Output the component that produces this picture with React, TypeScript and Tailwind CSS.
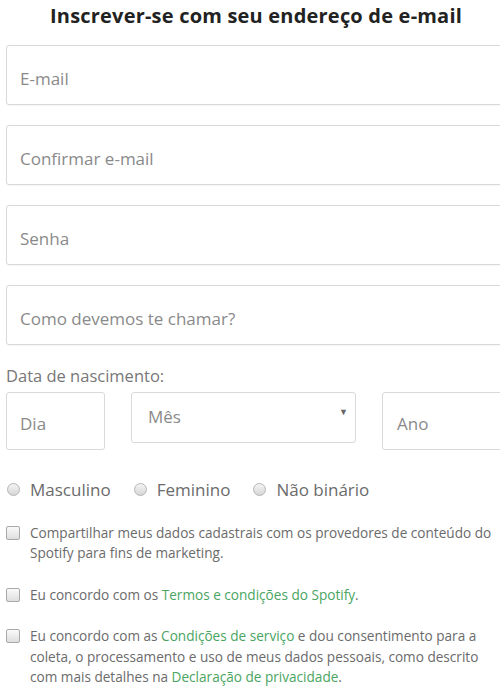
import React from 'react';

const TextField: React.FC<{ label: string }> = ({ label }) => (
  <div className="h-[60px] w-[520px] shrink-0 rounded-[3px] border border-[#d9d9d9] bg-white px-[13px] pt-[7px] flex items-center shadow-[0_1px_1px_rgba(0,0,0,0.04)]">
    <span className="text-[17px] text-[#8a8a8a]">{label}</span>
  </div>
);

const Radio: React.FC<{ label: string }> = ({ label }) => (
  <label className="flex items-center gap-[10px]">
    <span className="h-[13px] w-[13px] rounded-full border border-[#b5b5b5] bg-gradient-to-b from-[#f4f4f4] to-[#d6d6d6]"></span>
    <span className="text-[17px] text-[#6b6b6b]">{label}</span>
  </label>
);

const Check: React.FC<{ children: React.ReactNode }> = ({ children }) => (
  <div className="flex items-start gap-[10px]">
    <span className="mt-[3px] h-[14px] w-[14px] shrink-0 rounded-[2px] border border-[#a9a9a9] bg-gradient-to-b from-[#fafafa] to-[#dedede]"></span>
    <p className="text-[13.6px] leading-[20.5px] text-[#6b6b6b]">{children}</p>
  </div>
);

const Link: React.FC<{ children: React.ReactNode }> = ({ children }) => (
  <span className="text-[#4aa562]">{children}</span>
);

export default function App() {
  return (
    <div className="h-[691px] w-[500px] overflow-hidden bg-white font-['Open_Sans',sans-serif]">
      <h1 className="w-[512px] pt-[3px] text-center text-[20px] leading-[26px] tracking-[0.2px] font-bold text-[#222]">
        Inscrever-se com seu endereço de e-mail
      </h1>
      <div className="mt-[16px] flex flex-col gap-[20px] pl-[6px]">
        <TextField label="E-mail" />
        <TextField label="Confirmar e-mail" />
        <TextField label="Senha" />
        <TextField label="Como devemos te chamar?" />
      </div>

      <div className="mt-[21px] pl-[6px]">
        <div className="text-[16.5px] leading-[20px] text-[#777]">Data de nascimento:</div>
        <div className="mt-[6px] flex items-start gap-[26px]">
          <div className="h-[58px] w-[99px] shrink-0 rounded-[3px] border border-[#d9d9d9] flex items-center px-[13px] pt-[6px]">
            <span className="text-[17px] text-[#8a8a8a]">Dia</span>
          </div>
          <div className="h-[51px] w-[225px] shrink-0 rounded-[3px] border border-[#d9d9d9] flex items-center justify-between px-[16px] pr-[7px]">
            <span className="text-[17px] text-[#8a8a8a] -mt-[2px]">Mês</span>
            <span className="text-[9px] text-[#666] -mt-[12px]">▼</span>
          </div>
          <div className="h-[58px] w-[140px] shrink-0 rounded-[3px] border border-[#d9d9d9] flex items-center px-[14px] pt-[6px]">
            <span className="text-[17px] text-[#8a8a8a]">Ano</span>
          </div>
        </div>
      </div>

      <div className="mt-[27px] flex items-center gap-[23px] pl-[7px]">
        <Radio label="Masculino" />
        <Radio label="Feminino" />
        <Radio label="Não binário" />
      </div>

      <div className="mt-[20px] flex flex-col gap-[21px] pl-[6px] pr-[4px]">
        <Check>
          Compartilhar meus dados cadastrais com os provedores de conteúdo do Spotify para fins de marketing.
        </Check>
        <Check>
          Eu concordo com os <Link>Termos e condições do Spotify</Link>.
        </Check>
        <Check>
          Eu concordo com as <Link>Condições de serviço</Link> e dou consentimento para a coleta, o processamento e uso
          de meus dados pessoais, como descrito com mais detalhes na <Link>Declaração de privacidade</Link>.
        </Check>
      </div>
    </div>
  );
}
